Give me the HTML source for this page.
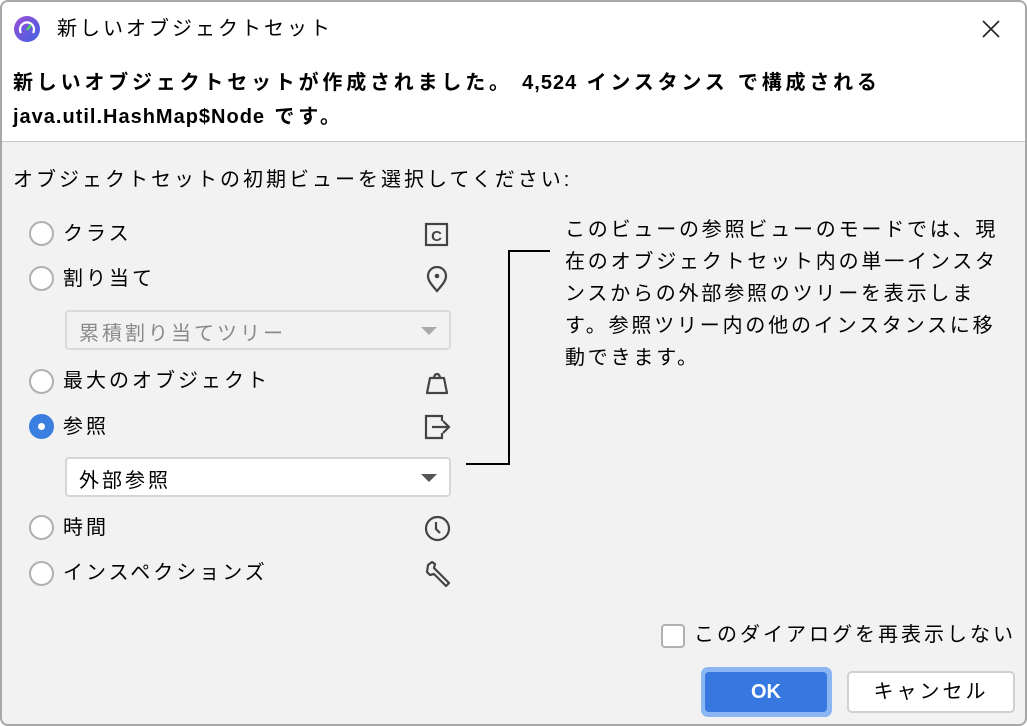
<!DOCTYPE html>
<html><head><meta charset="utf-8"><style>
*{box-sizing:border-box;margin:0;padding:0}
body{width:1027px;height:726px;overflow:hidden;background:#fff;font-family:"Liberation Sans","Noto Sans CJK JP",sans-serif;color:#000}
.win{position:absolute;left:0;top:0;width:1027px;height:726px;border:2px solid #a8a8a8;border-radius:8px;overflow:hidden;background:#f2f2f2}
.head{position:absolute;left:0;top:0;width:1023px;height:140px;background:#fff;border-bottom:1px solid #c8c8c8}
.t{position:absolute;white-space:nowrap;font-size:20px;line-height:24px;letter-spacing:3px}
.b{font-weight:bold;letter-spacing:3.8px}
.l{letter-spacing:1px}
.radio{position:absolute;left:27px;width:25px;height:25px;border-radius:50%;border:2px solid #b0b0b0;background:#fff}
.radio.on{border-color:#3a7ee0;background:#3a7ee0}
.radio.on:after{content:"";position:absolute;left:7px;top:7px;width:7px;height:7px;border-radius:50%;background:#fff}
.combo{position:absolute;left:63px;width:386px;height:40px;border:2px solid #d6d6d6;border-radius:4px;background:#fff}
.combo.dis{background:#f2f2f2;border-color:#dadada}
.combo span{position:absolute;left:12px;top:5px;font-size:20px;letter-spacing:3px}
.combo i{position:absolute;right:12px;top:15px;width:0;height:0;border-left:8px solid transparent;border-right:8px solid transparent;border-top:8px solid #555}
.combo.dis i{border-top-color:#aaa}
.ic{position:absolute;left:422px}
.ic svg{display:block}
.r{position:absolute;left:563px;font-size:20px;line-height:32px;white-space:nowrap;letter-spacing:2.8px}
</style></head><body>
<div class="win">
<div class="head">
<svg style="position:absolute;left:12px;top:14px" width="26" height="26" viewBox="0 0 26 26"><defs><linearGradient id="g" x1="0" y1="0" x2="1" y2="1"><stop offset="0" stop-color="#9b4fd8"/><stop offset="1" stop-color="#3f62e0"/></linearGradient></defs><circle cx="13" cy="13" r="13" fill="url(#g)"/><path d="M7 17a7 7 0 1 1 12 0" fill="none" stroke="#fff" stroke-width="2.2"/><path d="M13 14l4-5" stroke="#4cd06a" stroke-width="2.5"/></svg>
<div class="t" style="left:55px;top:15px">新しいオブジェクトセット</div>
<svg style="position:absolute;left:979px;top:17px" width="20" height="20" viewBox="0 0 20 20"><path d="M2 2L18 18M18 2L2 18" stroke="#222" stroke-width="1.6"/></svg>
<div class="t b" style="left:11px;top:69px">新しいオブジェクトセットが作成されました。 <span class="l">4,524</span> インスタンス で構成される</div>
<div class="t b" style="left:11px;top:103px"><span class="l">java.util.HashMap$Node</span> です。</div>
</div>
<div class="t" style="left:11px;top:166px">オブジェクトセットの初期ビューを選択してください:</div>

<div class="radio" style="top:219px"></div><div class="t" style="left:61px;top:220px">クラス</div>
<div class="ic" style="top:220px"><svg width="26" height="26" viewBox="0 0 26 26"><rect x="2" y="2" width="21" height="21" fill="none" stroke="#444" stroke-width="2.2"/><text x="12.5" y="19" font-size="15" font-weight="bold" text-anchor="middle" fill="#444" font-family="Liberation Sans">C</text></svg></div>
<div class="radio" style="top:264px"></div><div class="t" style="left:61px;top:265px">割り当て</div>
<div class="ic" style="top:264px"><svg width="26" height="28" viewBox="0 0 26 28"><path d="M13 25C6 17 4 14 4 10a9 9 0 0 1 18 0c0 4-2 7-9 15z" fill="none" stroke="#444" stroke-width="2.2"/><circle cx="13" cy="10" r="2.3" fill="#444"/></svg></div>
<div class="combo dis" style="top:308px"><span style="color:#8a8a8a">累積割り当てツリー</span><i></i></div>
<div class="radio" style="top:367px"></div><div class="t" style="left:61px;top:367px">最大のオブジェクト</div>
<div class="ic" style="top:366px"><svg width="26" height="28" viewBox="0 0 26 28"><path d="M6 10h14l3 15H3z" fill="none" stroke="#444" stroke-width="2.2" stroke-linejoin="round"/><path d="M10 10a3 4 0 0 1 6 0" fill="none" stroke="#444" stroke-width="2.2"/></svg></div>
<div class="radio on" style="top:412px"></div><div class="t" style="left:61px;top:413px">参照</div>
<div class="ic" style="top:412px"><svg width="28" height="26" viewBox="0 0 28 26"><path d="M18 7V2H2v22h16v-5" fill="none" stroke="#444" stroke-width="2.2"/><path d="M8 13h17M19 7l6 6-6 6" fill="none" stroke="#444" stroke-width="2.2"/></svg></div>
<div class="combo" style="top:455px"><span>外部参照</span><i></i></div>
<div class="radio" style="top:513px"></div><div class="t" style="left:61px;top:514px">時間</div>
<div class="ic" style="top:513px"><svg width="27" height="27" viewBox="0 0 27 27"><circle cx="13.5" cy="13.5" r="11.5" fill="none" stroke="#444" stroke-width="2.2"/><path d="M12 7v7l4 4" fill="none" stroke="#444" stroke-width="2.2"/></svg></div>
<div class="radio" style="top:559px"></div><div class="t" style="left:61px;top:559px">インスペクションズ</div>
<div class="ic" style="top:558px"><svg width="27" height="27" viewBox="0 0 27 27"><path d="M4 5l4-3 3 2-1 4 3 3 12 12-3 3-12-12-4 1-3-3z" fill="none" stroke="#444" stroke-width="2.2" stroke-linejoin="round"/></svg></div>

<svg style="position:absolute;left:0;top:0" width="1027" height="726"><path d="M548 249H507V462H464" fill="none" stroke="#000" stroke-width="2"/></svg>
<div class="r" style="top:212px">このビューの参照ビューのモードでは、現<br>在のオブジェクトセット内の単一インスタ<br>ンスからの外部参照のツリーを表示しま<br>す。参照ツリー内の他のインスタンスに移<br>動できます。</div>

<div style="position:absolute;left:659px;top:622px;width:24px;height:24px;border:2px solid #b0b0b0;border-radius:4px;background:#fff"></div>
<div class="t" style="left:692px;top:621px">このダイアログを再表示しない</div>
<div style="position:absolute;left:699px;top:665px;width:131px;height:50px;border-radius:7px;background:#8cb6f3"></div>
<div style="position:absolute;left:703px;top:670px;width:122px;height:40px;border-radius:4px;background:#3677e0;color:#fff;font-weight:bold;font-size:20px;text-align:center;line-height:40px">OK</div>
<div style="position:absolute;left:845px;top:669px;width:168px;height:42px;border-radius:5px;border:2px solid #d0d0d0;background:#fff;font-size:20px;text-align:center;line-height:38px;letter-spacing:3px">キャンセル</div>
</div>
</body></html>
